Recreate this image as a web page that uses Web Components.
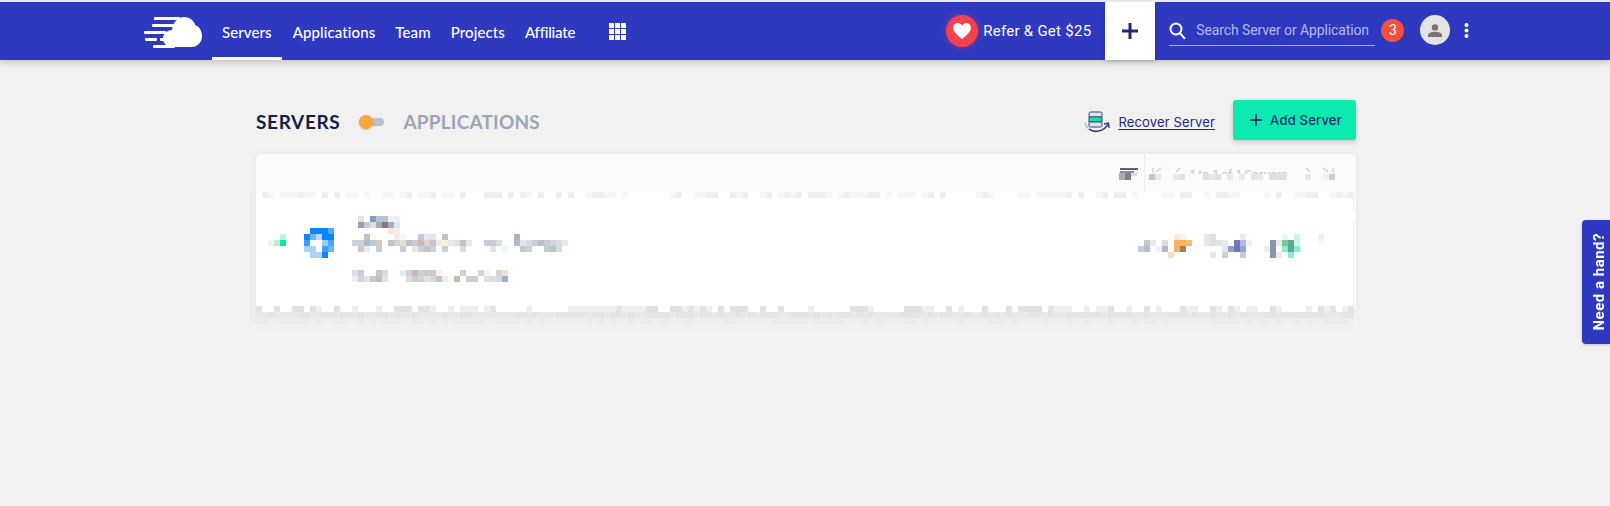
<!DOCTYPE html>
<html>
<head>
<meta charset="utf-8">
<title>Servers</title>
<style>
  html, body { margin: 0; height: 100%; background: #f1f1f1; overflow: hidden; }
  body { border-top: 2px solid #e9e9e9; box-sizing: border-box; font-family: Lato, sans-serif; }
</style>
</head>
<body>
<app-header></app-header>
<servers-page></servers-page>
<help-tab>Need a hand?</help-tab>

<script>
const headerTemplate = document.createElement('template');
headerTemplate.innerHTML = `
  <style>
    :host {
      display: flex;
      align-items: stretch;
      height: 58px;
      padding-left: 144px;
      background: #2f39bf;
      box-shadow: 0 2px 7px rgba(0, 0, 0, .22);
      color: #fff;
      position: relative;
      z-index: 2;
    }
    .logo { align-self: center; margin-top: 1px; margin-right: 9px; display: block; }
    nav { display: flex; align-items: stretch; }
    nav a {
      display: flex;
      align-items: center;
      padding: 0 10px;
      font: 500 15px Lato, sans-serif;
      letter-spacing: .1px;
      box-sizing: border-box;
      border-bottom: 3px solid transparent;
      padding-top: 5px;
    }
    nav a.active { border-bottom-color: #fff; margin-right: 1px; }
    nav a.tight { letter-spacing: -.2px; }
    .apps { align-self: center; margin-left: 24px; display: block; }
    .refer {
      display: flex;
      align-items: center;
      margin-left: 320px;
      font: 400 15px Roboto, sans-serif;
      letter-spacing: .27px;
      gap: 5px;
      margin-top: -1px;
      white-space: nowrap;
    }
    .heart {
      width: 32px;
      height: 32px;
      border-radius: 50%;
      background: #f7404f;
      box-shadow: 0 0 6px rgba(247, 64, 79, .45);
      display: flex;
      align-items: center;
      justify-content: center;
    }
    .plus {
      width: 50px;
      margin-left: 14px;
      background: #fff;
      display: flex;
      align-items: center;
      justify-content: center;
      box-shadow: 0 1px 4px rgba(0, 0, 0, .2);
    }
    .search {
      display: flex;
      align-items: center;
      align-self: flex-start;
      width: 206px;
      height: 44px;
      padding-top: 12px;
      box-sizing: border-box;
      margin-left: 14px;
      border-bottom: 1px solid #aab0ec;
      gap: 10px;
      font: 400 14px Roboto, sans-serif;
      letter-spacing: -.12px;
      color: #b4b9ef;
      white-space: nowrap;
    }
    .search svg { flex: none; margin-top: 3px; }
    .badge {
      width: 23px;
      height: 23px;
      margin-left: 6px;
      align-self: center;
      margin-top: -2px;
      border-radius: 50%;
      background: #f4513c;
      font: 400 14px Roboto, sans-serif;
      display: flex;
      align-items: center;
      justify-content: center;
    }
    .avatar {
      width: 30px;
      height: 30px;
      margin-left: 16px;
      align-self: center;
      margin-top: -2px;
      border-radius: 50%;
      background: #e3e3e3;
      display: flex;
      align-items: center;
      justify-content: center;
    }
    .more { align-self: center; margin-left: 14px; margin-top: -2px; display: block; }
  </style>
  <svg class="logo" width="59" height="32" viewBox="0 0 59 32" fill="#fff">
    <path d="M28 31C22 31 19 26.5 19 22.5C19 18 23 14 28 14C29 6 34 1 40 1C46 1 50 5 51.5 9.5C55.5 10.5 58 15 58 20C58 26 54 31 47 31Z"/>
    <rect x="10" y="1" width="26" height="3" rx="1"/>
    <rect x="8" y="8" width="22" height="3" rx="1"/>
    <rect x="0" y="15" width="22" height="3" rx="1"/>
    <rect x="1" y="22" width="12" height="3" rx="1"/>
    <rect x="16" y="22" width="6" height="3" rx="1"/>
    <rect x="9" y="29" width="22" height="3" rx="1"/>
  </svg>
  <nav>
    <a class="active">Servers</a>
    <a>Applications</a>
    <a>Team</a>
    <a>Projects</a>
    <a class="tight">Affiliate</a>
  </nav>
  <svg class="apps" width="17" height="17" viewBox="0 0 17 17" fill="#fff">
    <rect width="5" height="5"/><rect x="6" width="5" height="5"/><rect x="12" width="5" height="5"/>
    <rect y="6" width="5" height="5"/><rect x="6" y="6" width="5" height="5"/><rect x="12" y="6" width="5" height="5"/>
    <rect y="12" width="5" height="5"/><rect x="6" y="12" width="5" height="5"/><rect x="12" y="12" width="5" height="5"/>
  </svg>
  <div class="refer">
    <span class="heart">
      <svg width="18" height="16" viewBox="0 0 20 18" fill="#fff"><path d="M10 18C4 13 0 9.5 0 5.3C0 2.2 2.4 0 5.2 0C7 0 8.9 1 10 2.8C11.1 1 13 0 14.8 0C17.6 0 20 2.2 20 5.3C20 9.5 16 13 10 18Z"/></svg>
    </span>
    <span>Refer &amp; Get $25</span>
  </div>
  <div class="plus">
    <svg width="16" height="16" viewBox="0 0 16 16" fill="#1f2577"><rect x="6.5" width="3" height="16"/><rect y="6.5" width="16" height="3"/></svg>
  </div>
  <div class="search">
    <svg width="17" height="18" viewBox="0 0 17 18" fill="none" stroke="#fff" stroke-width="2"><circle cx="7" cy="7" r="5.5"/><path d="M11 11.2L16 16.8"/></svg>
    <span>Search Server or Application</span>
  </div>
  <div class="badge">3</div>
  <div class="avatar">
    <svg width="14" height="13" viewBox="0 0 14 13" fill="#7c736f"><circle cx="7" cy="3.4" r="3.2"/><path d="M0 13V11C0 8.8 4 7.8 7 7.8C10 7.8 14 8.8 14 11V13Z"/></svg>
  </div>
  <svg class="more" width="5" height="15" viewBox="0 0 5 15" fill="#fff"><circle cx="2.5" cy="2" r="2"/><circle cx="2.5" cy="7.5" r="2"/><circle cx="2.5" cy="13" r="2"/></svg>
`;

class AppHeader extends HTMLElement {
    constructor() {
        super();
        this.attachShadow({mode: 'open'})
            .appendChild(headerTemplate.content.cloneNode(true));
    }
}

const pageTemplate = document.createElement('template');
pageTemplate.innerHTML = `
  <style>
    :host { display: block; width: 1100px; margin-left: 256px; padding-top: 40px; }
    .head { display: flex; align-items: center; height: 40px; margin-bottom: 14px; }
    .title { font: 700 19px Lato, sans-serif; letter-spacing: .65px; color: #141e4a; padding-top: 3px; }
    .title.off { color: #9da5b5; letter-spacing: .2px; }
    .toggle { position: relative; width: 25px; height: 8px; margin: 3px 19px 0 19px; background: #b9bfcf; border-radius: 4px; }
    .toggle i { position: absolute; left: 0; top: -3px; width: 14px; height: 14px; border-radius: 50%; background: #fca63a; box-shadow: 0 1px 2px rgba(0,0,0,.15); }
    .recover { display: flex; align-items: center; margin-left: auto; gap: 8px; margin-top: 3px; }
    .recover a {
      font: 400 13px Inter, sans-serif;
      letter-spacing: .15px;
      color: #22287c;
      text-decoration: underline;
      text-underline-offset: 2px;
    }
    .add {
      display: flex;
      align-items: center;
      justify-content: center;
      gap: 8px;
      width: 123px;
      height: 40px;
      padding-left: 3px;
      box-sizing: border-box;
      margin-left: 18px;
      border-radius: 3px;
      background: #0ceab0;
      box-shadow: 0 2px 5px rgba(0, 0, 0, .2);
      font: 500 13px Inter, sans-serif;
      letter-spacing: .2px;
      color: #1f2a6e;
    }
  </style>
  <div class="head">
    <span class="title">SERVERS</span>
    <span class="toggle"><i></i></span>
    <span class="title off">APPLICATIONS</span>
    <div class="recover">
      <svg width="26" height="22" viewBox="0 0 26 22" fill="none">
        <rect x="5" y="1" width="13" height="5" rx="1.5" fill="#dfe3ec" stroke="#3a4270"/>
        <rect x="5" y="6" width="13" height="5" fill="#13e2ad" stroke="#3a4270"/>
        <rect x="5" y="11" width="13" height="5" rx="1.5" fill="#dfe3ec" stroke="#3a4270"/>
        <path d="M1 12C2 15 3 16 5 18" stroke="#13e2ad" stroke-width="1.4" stroke-dasharray="1.5 1"/>
        <path d="M5 18C10 22 20 21 24 13" stroke="#2f39a0" stroke-width="1.6"/>
        <path d="M20 13L24.5 12L25 17" stroke="#2f39a0" stroke-width="1.4"/>
      </svg>
      <a>Recover Server</a>
    </div>
    <div class="add">
      <svg width="12" height="12" viewBox="0 0 12 12" fill="#1f2a6e"><rect x="5.2" width="1.6" height="12"/><rect y="5.2" width="12" height="1.6"/></svg>
      <span>Add Server</span>
    </div>
  </div>
  <server-card></server-card>
`;

class ServersPage extends HTMLElement {
    constructor() {
        super();
        this.attachShadow({mode: 'open'})
            .appendChild(pageTemplate.content.cloneNode(true));
    }
}

const cardTemplate = document.createElement('template');
cardTemplate.innerHTML = `
  <style>
    :host {
      display: block;
      position: relative;
      height: 158px;
      background: #fff;
      border-radius: 6px;
      box-shadow: 0 0 6px rgba(0, 0, 0, .05);
    }
    .bar {
      display: flex;
      justify-content: flex-end;
      height: 38px;
      padding-right: 63px;
      box-sizing: border-box;
      background: #fbfbfb;
      border-radius: 6px 6px 0 0;
    }
    .divider { width: 1px; background: #ececec; margin-right: 45px; }
    .pager {
      width: 103px;
      margin-top: 14px;
      white-space: nowrap;
      font: 400 12px/14px Inter, sans-serif;
      color: #c2c6d0;
    }
    svg { position: absolute; left: -6px; top: 38px; overflow: visible; }
  </style>
  <div class="bar">
    <span class="divider"></span>
    <span class="pager">1 to 1 of 1 Servers</span>
  </div>
  <svg id="mosaic" width="1112" height="138" shape-rendering="crispEdges"></svg>
`;

// hand-read blocks of the blurred row: row -> column -> colour, on a 6px grid
const BLOCKS = {
    4: {18: 'e3e3dc', 20: '7a9cc4', 21: 'b5c4d8', 22: 'b5c4d8', 23: 'f8efe6', 24: 'f0f0f0'},
    5: {18: 'a09cac', 19: 'bccde4', 20: 'dcdfdc', 21: 'a9a9b5', 22: '807a80', 23: 'a9a9cc', 24: 'd4ebf4'},
    6: {10: '0a84ff', 11: '0a84ff', 12: '0a84ff', 13: '4da6ff', 23: 'f8e6d4', 24: 'f0f0f0'},
    7: {5: 'b5f5e8', 9: '0a84ff', 10: '66b3ff', 11: 'b3d9ff', 12: '0a84ff', 13: '0a84ff',
        19: 'bcc4d0', 24: 'f8ece0', 25: 'faf5ef', 28: 'c0cad8', 29: 'e4e8f2', 30: 'e4e4f0', 32: 'bcc4d0', 44: 'a8b4b8',
        154: 'fde8d4', 155: 'fdf0e6', 159: 'e4e6ea', 160: 'dcdfe4', 165: 'ececf8', 172: 'e4f8fa', 174: 'c8f8ec', 178: 'f0f0fa'},
    8: {3: 'f0f8e8', 4: 'b5f0d5', 5: '0ae8a8', 9: '3d9bff', 12: '99ccff', 13: '4da6ff',
        17: 'ccd0d8', 18: 'ccd0d8', 19: 'b0bccc', 20: 'b8c8d8', 21: 'dcc8bc', 23: 'b8c8c8', 24: 'cfd4d0', 25: 'e4e0d8',
        26: 'b8c0d0', 27: 'c8c8d4', 28: 'c8bcb0', 29: 'e4d0c0', 30: 'b8c8d8', 31: 'f4e8d8', 32: 'f8f0e4', 33: 'd8ecf8',
        34: 'e4e0e0', 35: 'c8c0c0', 36: 'e8e8e8', 39: 'c4cad8', 40: 'ccccd4', 41: 'dcdce0', 44: 'b0c0c0', 45: 'dce8f0',
        46: 'd4dce4', 47: 'c8ccd0', 48: 'bcbcc4', 49: 'c8ccd0', 50: 'd8d4d0', 51: 'dcdcd8', 52: 'e0ecf8',
        149: 'c0c8d0', 150: 'e8eaee', 152: 'd8dce0', 154: 'fdb060', 155: 'fdb060', 156: 'fdb870', 159: 'e4e6ea', 160: 'dcdfe4',
        161: 'e0e4e8', 162: 'e8eaee', 164: '7078b0', 165: 'b8b8e8', 166: 'f0f0fc', 170: '8c94a8', 171: 'e8eaee', 172: '80c898',
        173: '60a890', 174: 'c8f8ec', 178: 'f8f8fe'},
    9: {9: 'a5d2ff', 10: 'a5d2ff', 12: '3d9bff', 13: '66b3ff',
        18: 'ccc8c8', 19: 'e8ecf0', 21: 'c4ccdc', 25: 'c8ccd8', 27: 'e4e8e8', 28: 'c8d0d8', 29: 'bcc4c8', 30: 'ccd0d4',
        32: 'c8d0d4', 35: 'dcdfe2', 40: 'e0e4ec', 42: 'ecf8fa', 45: 'c0c8d0', 46: 'c8d4d0', 49: 'c4ccc8', 50: 'c0c4c8', 51: 'd4dce4',
        148: 'c4ccd4', 149: 'b4bcc8', 151: 'f0f2f4', 152: 'b0b8c4', 154: 'fdb060', 155: 'ac8040', 162: 'e4e6ea', 163: '9098d8',
        164: '7078b0', 165: '9ca0e0', 169: 'eceef0', 170: '8c94a8', 172: '88ecd0', 173: '60a890', 174: '88ecd0'},
    10: {10: 'aad4ff', 11: 'aad4ff', 12: '0a84ff', 153: 'fddcbc', 160: 'e4e6ea', 162: 'ccd0d8', 165: 'c4c4ec', 170: '8c94a8', 171: 'e8eaee', 173: '88ecd8'},
    13: {17: 'e0dcd8', 18: 'c8ccd4', 21: 'c0c8d0', 22: 'dcdcd4', 25: 'e0f0f8', 26: 'd4d0cc', 27: 'c8b8b8', 28: 'c8d0d8',
        29: 'c8ccd0', 30: 'c8ccd0', 31: 'f8f0e8', 35: 'ccd4cc', 38: 'dcd4d0', 39: 'f8f4ec', 41: 'd8d4cc', 42: 'f0e0d0'},
    14: {17: 'e4f0f4', 18: 'ccd4dc', 19: 'dfe4e8', 20: 'c4c8d4', 21: 'c4bcb8', 22: 'e4e4e0', 26: 'dcdcd4', 27: 'ccccc8',
        28: 'd4d4d0', 29: 'e4e0dc', 30: 'dcd8d0', 31: 'c0c4c8', 32: 'f8e8d4', 34: 'c8bcb0', 36: 'ccd0d8', 37: 'c8d0d4',
        39: 'e4e0dc', 40: 'dcdcd8', 41: 'ccdcec', 42: 'a8b0c0'}
};

// blocks of the toolbar, in page pixels; the first one hides the lower half of the pager text
const BAR_BLOCKS = [
    [1188, 174, 110, 12, 'fbfbfb'],
    [1119, 173, 6, 7, 'b8a8a8'], [1125, 173, 6, 7, '788088'], [1131, 173, 6, 3, 'd8dce0'],
    [1149, 174, 6, 6, 'c0c8d0'], [1155, 174, 6, 6, 'e4e8ec'], [1173, 174, 6, 6, 'e8eaee'], [1179, 174, 6, 6, 'e0e2e8'],
    [1203, 174, 6, 6, 'dcdfe6'], [1209, 174, 6, 6, 'e4e6ea'], [1215, 174, 6, 6, 'dcdfe6'], [1227, 174, 6, 6, 'e8e8ee'],
    [1239, 174, 6, 6, 'e8eaee'], [1251, 174, 6, 6, 'e4e4ec'], [1257, 174, 6, 6, 'e8e8ee'], [1269, 174, 18, 6, 'dcdfe6'],
    [1305, 174, 6, 6, 'e4e8ec'], [1323, 174, 6, 6, 'f0f2f4'], [1329, 174, 6, 6, 'c8d0d8'],
    [1120, 168, 18, 2, '5a6278'], [1120, 171, 14, 2, '8a90a0']
];

class ServerCard extends HTMLElement {
    constructor() {
        super();
        this.attachShadow({mode: 'open'})
            .appendChild(cardTemplate.content.cloneNode(true));
    }

    connectedCallback() {
        const svg = this.shadowRoot.getElementById('mosaic');
        let seed = 7;
        const rnd = () => {
            seed = (seed * 1103515245 + 12345) & 0x7fffffff;
            return (seed >> 8) % 100 / 100;
        };
        let out = '';
        const rect = (x, y, w, h, color) => {
            out += `<rect x="${x}" y="${y}" width="${w}" height="${h}" fill="#${color}"/>`;
        };

        // mosaic noise along the top of the row and below the card
        for (let c = 1; c < 184; c++) {
            const a = rnd();
            if (a < .55) rect(c * 6, 0, 6, 6, a < .25 ? 'efefef' : 'f7f7f7');
            const b = rnd();
            if (b < .55) rect(c * 6, 19 * 6, 6, 6, b < .25 ? 'e2e2e2' : 'efefef');
            rect(c * 6, 20 * 6, 6, 6, rnd() < .5 ? 'e5e5e5' : 'e9e9e9');
            rect(c * 6, 21 * 6, 6, 6, rnd() < .5 ? 'ececec' : 'eeeeee');
            rect(c * 6, 22 * 6, 6, 6, 'f0f0f0');
        }
        for (let r = 0; r < 22; r++) {
            rect(0, r * 6, 6, 6, 'ededed');
        }
        rect(1103, 0, 2, 18, 'f2f2f2');
        rect(1103, 30, 2, 84, 'f2f2f2');

        for (const r in BLOCKS) {
            for (const c in BLOCKS[r]) rect(c * 6, r * 6, 6, 6, BLOCKS[r][c]);
        }
        BAR_BLOCKS.forEach(b => rect(b[0] - 250, b[1] - 192, b[2], b[3], b[4]));

        // pager arrows cut off by the blur
        const arrows = 'M903 -24v5M911 -24l-5 4M930 -24l-4 4M1056 -24l4 4M1073 -24l5 4M1083 -24v5';
        out += `<path d="${arrows}" fill="none" stroke="#c6cad4" stroke-width="1.2" shape-rendering="auto"/>`;
        svg.innerHTML = out;
    }
}

const helpTemplate = document.createElement('template');
helpTemplate.innerHTML = `
  <style>
    :host {
      position: fixed;
      right: 0;
      top: 220px;
      width: 28px;
      height: 124px;
      display: flex;
      align-items: center;
      justify-content: center;
      background: #2f39bf;
      border-radius: 4px 0 0 4px;
      box-shadow: 0 1px 3px rgba(0, 0, 0, .2);
      color: #fff;
      font: 700 15px Roboto, sans-serif;
      letter-spacing: .5px;
    }
    span { writing-mode: vertical-rl; transform: rotate(180deg); white-space: nowrap; padding-right: 5px; }
  </style>
  <span><slot></slot></span>
`;

class HelpTab extends HTMLElement {
    constructor() {
        super();
        this.attachShadow({mode: 'open'})
            .appendChild(helpTemplate.content.cloneNode(true));
    }
}

customElements.define('app-header', AppHeader);
customElements.define('server-card', ServerCard);
customElements.define('servers-page', ServersPage);
customElements.define('help-tab', HelpTab);
</script>
</body>
</html>
